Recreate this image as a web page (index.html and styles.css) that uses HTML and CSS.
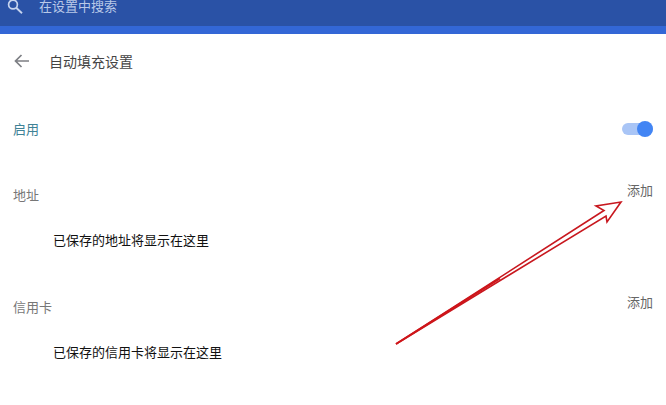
FILE: index.html
```html
<!DOCTYPE html>
<html lang="zh-CN">
<head>
    <meta charset="UTF-8">
    <title>自动填充设置</title>
    <link rel="stylesheet" href="styles.css">
</head>
<body>
    <div class="topbar">
        <div class="search">
            <svg class="search-icon" viewBox="0 0 16 16" width="16" height="16">
                <circle cx="6" cy="6.5" r="4.4" fill="none" stroke="#c5d3ee" stroke-width="1.7"/>
                <path d="M9.2 9.7 L15 15.3" stroke="#c5d3ee" stroke-width="1.9" fill="none"/>
            </svg>
            <span>在设置中搜索</span>
        </div>
    </div>
    <div class="stripe"></div>

    <div class="page-title">
        <svg class="back" viewBox="0 0 16 14" width="16" height="14">
            <path d="M15 7 H2 M7.5 1 L1.5 7 L7.5 13" fill="none" stroke="#7d7f84" stroke-width="1.7"/>
        </svg>
        <h1>自动填充设置</h1>
    </div>

    <div class="row enable">
        <span class="enable-label">启用</span>
        <div class="toggle"><div class="knob"></div></div>
    </div>

    <div class="section address">
        <div class="section-head">
            <span class="section-name">地址</span>
            <a href="#" class="add">添加</a>
        </div>
        <p class="empty">已保存的地址将显示在这里</p>
    </div>

    <div class="section cards">
        <div class="section-head">
            <span class="section-name">信用卡</span>
            <a href="#" class="add">添加</a>
        </div>
        <p class="empty">已保存的信用卡将显示在这里</p>
    </div>

    <svg class="arrow" viewBox="0 0 666 405" width="666" height="405">
        <path d="M396 344 L606 216 L607 222 L621 202 L596 206 L604 210.5 Z" fill="#fff" stroke="#c8181f" stroke-width="1.6"/>
        <path d="M396 344 L500 278.5" stroke="#cf1519" stroke-width="2" fill="none"/>
    </svg>
</body>
</html>
```

FILE: styles.css
```css
* {
    box-sizing: border-box;
    margin: 0;
    padding: 0;
    font-family: "Liberation Sans", "Noto Sans CJK SC", sans-serif;
}
body {
    background-color: #fff;
    width: 666px;
    height: 405px;
    overflow: hidden;
    position: relative;
}
.topbar {
    height: 26px;
    background-color: #2a52a6;
    overflow: hidden;
}
.search {
    display: flex;
    align-items: center;
    height: 11px;
    padding-left: 7px;
    color: #b9c9e8;
    font-size: 13px;
}
.search-icon {
    flex: none;
    margin-right: 16px;
}
.stripe {
    height: 8px;
    background-color: #3367d6;
}
.page-title {
    display: flex;
    align-items: center;
    height: 54px;
    padding-left: 14px;
}
.back {
    margin-right: 19px;
}
.page-title h1 {
    font-size: 14px;
    font-weight: 400;
    color: #444;
}
.row {
    display: flex;
    align-items: center;
    justify-content: space-between;
}
.enable {
    height: 28px;
    margin-top: 26px;
    padding: 0 13px;
}
.enable-label {
    font-size: 13px;
    color: #3f8296;
}
.toggle {
    width: 31px;
    height: 12px;
    margin-top: 2px;
    border-radius: 6px;
    background-color: #a9c5f6;
    position: relative;
}
.knob {
    position: absolute;
    right: 0;
    top: -2px;
    width: 16px;
    height: 16px;
    border-radius: 50%;
    background-color: #4285f4;
}
.section {
    padding: 0 13px;
}
.address {
    margin-top: 44px;
}
.cards {
    margin-top: 47px;
}
.section-head {
    display: flex;
    justify-content: space-between;
    align-items: flex-start;
    height: 45px;
}
.section-name {
    font-size: 13px;
    line-height: 20px;
    color: #777;
}
.add {
    font-size: 13px;
    line-height: 20px;
    margin-top: -5px;
    color: #666;
    text-decoration: none;
}
.empty {
    font-size: 13px;
    line-height: 20px;
    color: #111;
    padding-left: 40px;
}
.arrow {
    position: absolute;
    left: 0;
    top: 0;
    pointer-events: none;
}
```
